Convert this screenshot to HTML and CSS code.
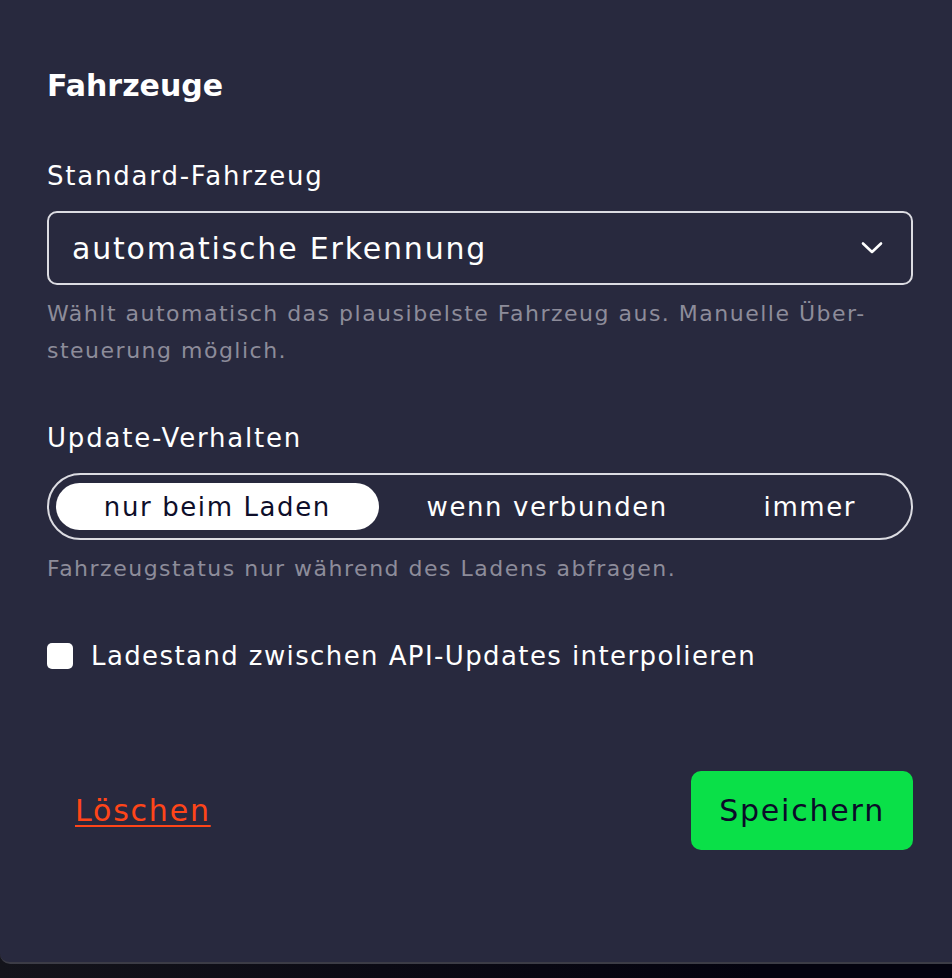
FILE: index.html
```html
<!DOCTYPE html>
<html lang="de">
<head>
  <meta charset="UTF-8">
  <meta name="viewport" content="width=device-width, initial-scale=1.0">
  <title>Fahrzeuge</title>
  <link rel="stylesheet" href="styles.css">
</head>
<body>
  <!-- Modal -->
  <div class="modal">
    <h2 class="modal-title">Fahrzeuge</h2>

    <div class="field">
      <label class="field-label" for="vehicle">Standard-Fahrzeug</label>
      <div class="select-wrap">
        <select id="vehicle" class="select">
          <option>automatische Erkennung</option>
        </select>
        <svg class="chevron" width="22" height="14" viewBox="0 0 22 14" fill="none">
          <path d="M2 2.5 L11 11 L20 2.5" stroke="#fff" stroke-width="2.6" stroke-linecap="round" stroke-linejoin="round"/>
        </svg>
      </div>
      <p class="help">Wählt automatisch das plausibelste Fahrzeug aus. Manuelle Über-<br>steuerung möglich.</p>
    </div>

    <div class="field">
      <span class="field-label">Update-Verhalten</span>
      <div class="segmented">
        <button class="segment active">nur beim Laden</button>
        <button class="segment">wenn verbunden</button>
        <button class="segment">immer</button>
      </div>
      <p class="help">Fahrzeugstatus nur während des Ladens abfragen.</p>
    </div>

    <label class="check-row">
      <input type="checkbox" class="check">
      <span>Ladestand zwischen API-Updates interpolieren</span>
    </label>

    <!-- Footer -->
    <div class="actions">
      <button class="btn btn-link">Löschen</button>
      <button class="btn btn-primary">Speichern</button>
    </div>
  </div>
</body>
</html>
```

FILE: styles.css
```css
body {
  margin: 0;
  height: 978px;
  font-family: "DejaVu Sans", sans-serif;
  color: #fff;
  background: linear-gradient(90deg, #14141b 0%, #0b0a14 40%, #04030f 80%);
}

/* Modal */
.modal {
  background-color: #28293e;
  padding: 69px 39px 112px 47px;
  border-bottom: 2px solid #3c3c46;
  border-bottom-left-radius: 10px;
}

.modal-title {
  margin: 0;
  font-size: 30px;
  line-height: 34px;
  font-weight: bold;
}

.field {
  margin-top: 58px;
}

.field + .field,
.field + .check-row {
  margin-top: 54px;
}

.field-label {
  display: block;
  font-size: 26px;
  line-height: 30px;
  letter-spacing: 1.8px;
  margin-bottom: 20px;
}

/* Select */
.select-wrap {
  position: relative;
}

.select {
  display: block;
  width: 100%;
  height: 74px;
  padding: 0 60px 0 23px;
  font-family: inherit;
  font-size: 30px;
  letter-spacing: 1.8px;
  color: #fff;
  background-color: transparent;
  border: 2px solid #dcdce2;
  border-radius: 10px;
  appearance: none;
  -webkit-appearance: none;
  outline: none;
}

.select option {
  color: #000;
}

.chevron {
  position: absolute;
  right: 30px;
  top: 30px;
  pointer-events: none;
}

.help {
  margin: 10px 0 0;
  font-size: 22px;
  line-height: 37px;
  letter-spacing: 1.5px;
  color: #8d8c9a;
}

/* Segmented control */
.segmented {
  display: flex;
  padding: 8px 7px;
  border: 2px solid #dcdce2;
  border-radius: 999px;
}

.segment {
  flex: 1 1 auto;
  height: 47px;
  padding: 0 20px;
  font-family: inherit;
  font-size: 26px;
  letter-spacing: 1.6px;
  color: #fff;
  background: none;
  border: none;
  border-radius: 999px;
  cursor: pointer;
}

.segment.active {
  color: #0e0e2a;
  background-color: #fff;
}

/* Checkbox */
.check-row {
  display: flex;
  align-items: center;
  gap: 18px;
  font-size: 26px;
  line-height: 30px;
  letter-spacing: 1.4px;
}

.check {
  appearance: none;
  -webkit-appearance: none;
  width: 26px;
  height: 26px;
  margin: 0;
  background-color: #fff;
  border-radius: 5px;
}

/* Footer buttons */
.actions {
  display: flex;
  justify-content: space-between;
  margin-top: 100px;
}

.btn {
  height: 79px;
  padding: 0 28px;
  font-family: inherit;
  font-size: 30px;
  letter-spacing: 1.8px;
  border: none;
  border-radius: 10px;
  cursor: pointer;
}

.btn-link {
  color: #ff4519;
  background: none;
  text-decoration: underline;
  text-underline-offset: 4px;
  text-decoration-thickness: 2px;
}

.btn-primary {
  color: #0b0b28;
  background-color: #0ae048;
}
```
